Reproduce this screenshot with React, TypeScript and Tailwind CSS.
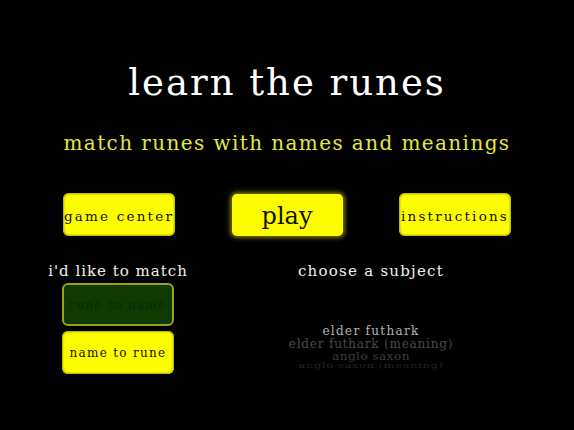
const font = "[font-family:'DejaVu_Serif','Liberation_Serif',serif]";

function Btn({ label, cls = "" }: { label: string; cls?: string }) {
  return (
    <div className={`flex h-[43px] w-[112px] items-center justify-center whitespace-nowrap rounded-[6px] bg-[#fdfd00] text-[#111100] shadow-[inset_0_0_2px_1px_#a8a800] ${cls}`}>
      {label}
    </div>
  );
}

export default function App() {
  return (
    <div className={`flex h-[430px] w-[574px] flex-col overflow-hidden bg-black ${font}`}>
      <h1 className="mt-[62px] h-[42px] text-center text-[37px] leading-[42px] tracking-[2px] text-white">learn the runes</h1>
      <p className="mt-[27px] h-[24px] text-center text-[20px] leading-[24px] tracking-[1.4px] text-[#e6e640]">match runes with names and meanings</p>

      <div className="mt-[38px] flex items-center justify-between px-[63px]">
        <Btn label="game center" cls="pt-[3px] text-[13.5px] tracking-[2.2px]" />
        <div className="mx-[1px] flex h-[42px] w-[111px] items-center justify-center rounded-[5px] bg-[#fdfd00] pt-[3px] text-[24px] text-[#111100] shadow-[0_0_4px_2px_#7a7400]">play</div>
        <Btn label="instructions" cls="pt-[3px] text-[13.5px] tracking-[2.2px]" />
      </div>

      <div className="mt-[25px] flex">
        <div className="ml-[44px] flex w-[148px] flex-col items-center">
          <div className="h-[20px] whitespace-nowrap text-[15px] leading-[20px] tracking-[1px] text-[#f0f0f0]">i'd like to match</div>
          <div className="mt-[2px] flex h-[43px] w-[112px] items-center justify-center whitespace-nowrap rounded-[6px] border-2 border-[#9aa020] bg-[#0f3b00] text-[12px] tracking-[1.3px] text-[#0a2a06]">rune to name</div>
          <Btn label="name to rune" cls="mt-[5px] text-[12px] tracking-[1.3px]" />
        </div>
        <div className="ml-[46px] flex w-[266px] flex-col items-center">
          <div className="h-[20px] whitespace-nowrap text-[15px] leading-[20px] tracking-[1.25px] text-[#f0f0f0]">choose a subject</div>
          <div className="mt-[44px] flex flex-col items-center whitespace-nowrap">
            <div className="h-[13px] text-[12px] leading-[13px] tracking-[1.3px] text-[#b4b4b4]">elder futhark</div>
            <div className="h-[13px] text-[12px] leading-[13px] tracking-[0.8px] text-[#4a4a4a]">elder futhark (meaning)</div>
            <div className="h-[11px] origin-top scale-y-[0.9] text-[12px] leading-[13px] tracking-[0.5px] text-[#3e3e3e]">anglo saxon</div>
            <div className="h-[8px] origin-top scale-y-[0.6] text-[11.5px] leading-[13px] tracking-[0.6px] text-[#232323]">anglo saxon (meaning)</div>
          </div>
        </div>
      </div>
    </div>
  );
}
